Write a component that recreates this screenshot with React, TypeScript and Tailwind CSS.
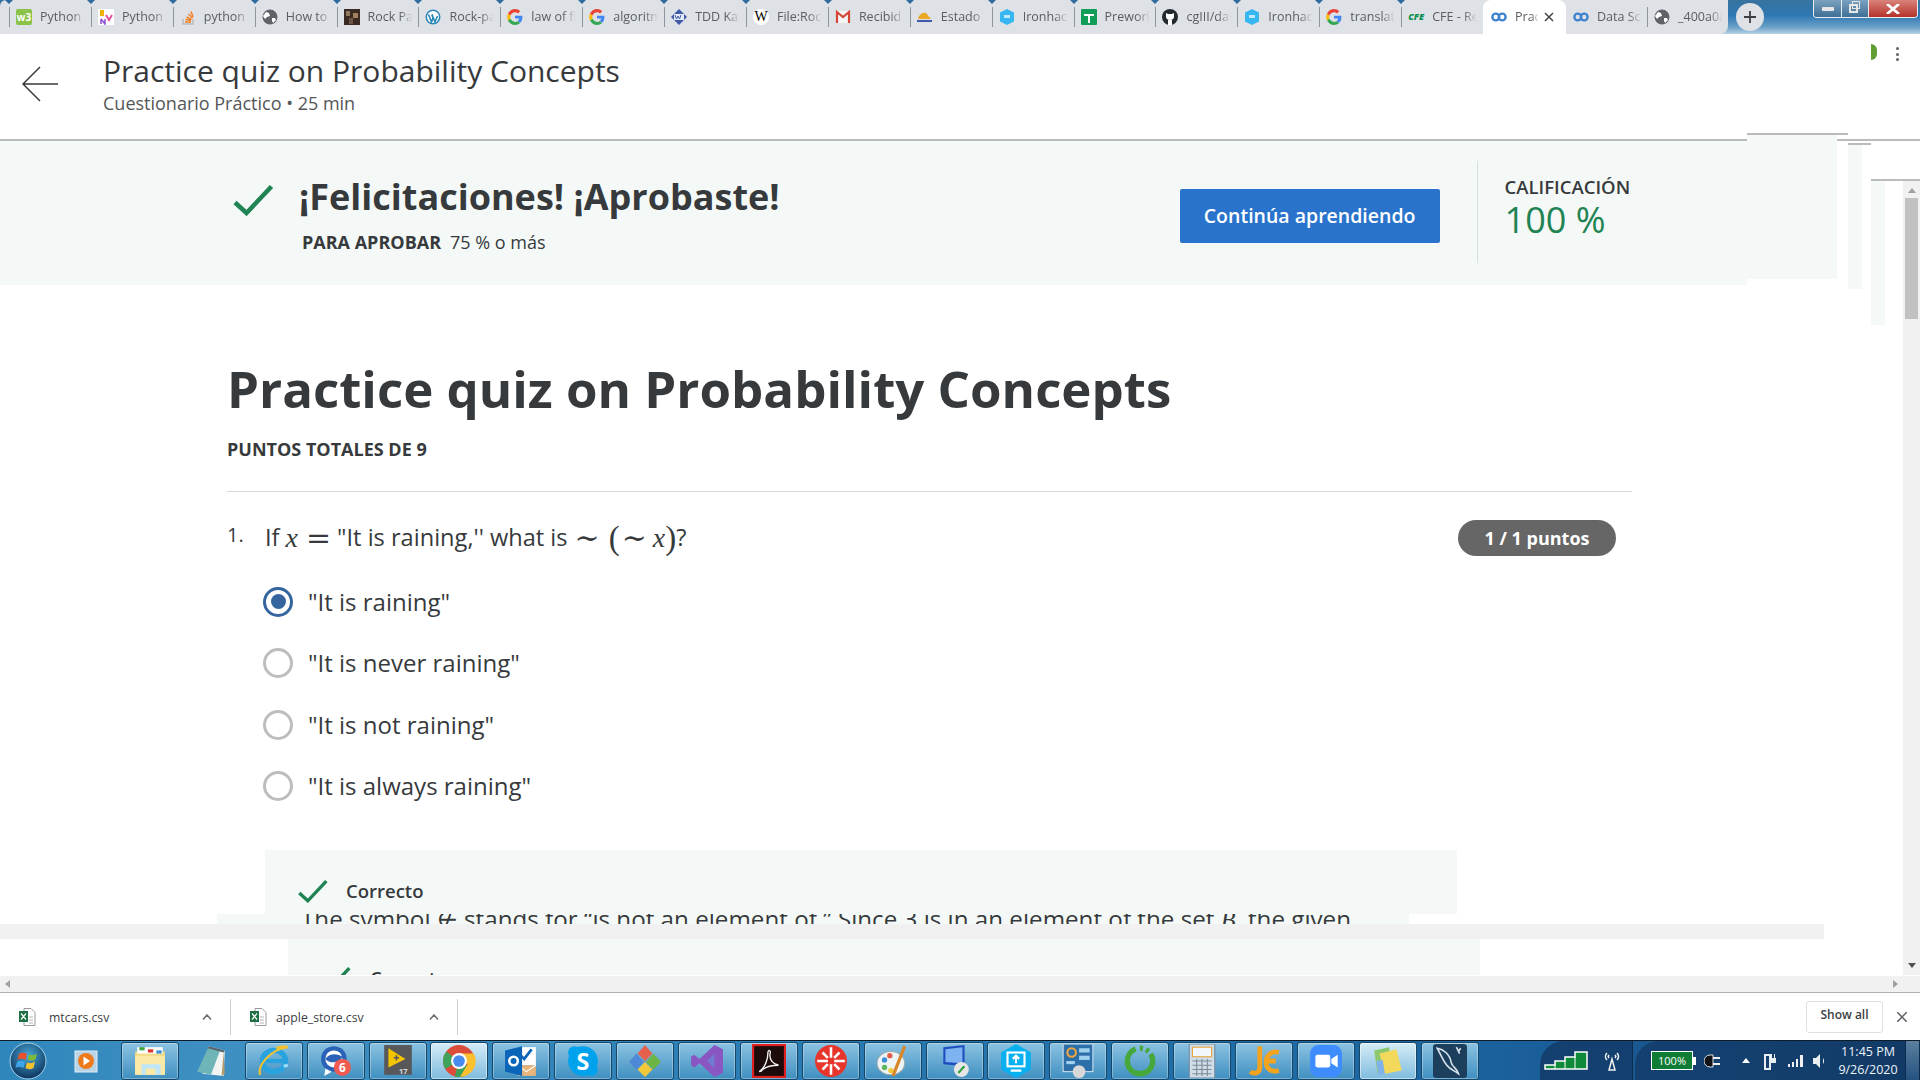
import type { ReactNode } from "react";

const sans = "font-['Open_Sans','Liberation_Sans',sans-serif]";

function Globe({ c = "#5f6368" }: { c?: string }) {
  return (
    <svg viewBox="0 0 16 16" className="size-4">
      <circle cx="8" cy="8" r="7.5" fill={c} />
      <path d="M4 3l3 1 1 3-3 1-2 2-2-3zM10 9l3 0 1 2-3 3-1-2z" fill="#fff" />
    </svg>
  );
}

function GoogleG() {
  return (
    <svg viewBox="0 0 16 16" className="size-4">
      <path d="M15.4 8.2c0-.6 0-1-.1-1.500H8v2.900h4.200c-.2 1-.7 1.700-1.500 2.300l2.400 1.900c1.500-1.300 2.300-3.300 2.300-5.600z" fill="#4285f4" />
      <path d="M8 16c2.100 0 3.900-.7 5.100-1.900l-2.400-1.900c-.7.400-1.600.7-2.700.7-2.100 0-3.800-1.400-4.500-3.300L1 11.500C2.300 14.200 5 16 8 16z" fill="#34a853" />
      <path d="M3.500 9.600c-.3-1-.3-2.100 0-3.100L1 4.500c-1.100 2.200-1.100 4.800 0 7z" fill="#fbbc05" />
      <path d="M8 3.200c1.200 0 2.200.4 3 1.200l2.200-2.200C11.800.9 10 0 8 0 5 0 2.300 1.800 1 4.500l2.500 2C4.200 4.600 5.900 3.200 8 3.200z" fill="#ea4335" />
    </svg>
  );
}

function Infinity2() {
  return (
    <svg viewBox="0 0 16 16" className="size-4" fill="none" stroke="#3f83cf" strokeWidth="2.400">
      <circle cx="4.800" cy="8" r="3.400" />
      <circle cx="11.200" cy="8" r="3.400" />
    </svg>
  );
}

function Hex() {
  return (
    <svg viewBox="0 0 16 16" className="size-4">
      <path d="M8 0l7 3.500v9L8 16l-7-3.500v-9z" fill="#38b6f2" />
      <rect x="5" y="6" width="6" height="3" fill="#bfe8fb" />
    </svg>
  );
}

const tabs: { label: string; icon: ReactNode }[] = [
  { label: "Python f", icon: <div className="size-4 rounded-[2px] bg-[#8bc34a] text-center text-[10px] leading-4 font-bold text-white">w3</div> },
  { label: "Python c", icon: <svg viewBox="0 0 16 16" className="size-4"><rect width="16" height="16" fill="#fff" /><path d="M2 1h4v6H2z" fill="#f0b400" /><path d="M8 6l3 5 3-5" stroke="#e0529c" strokeWidth="2" fill="none" /><path d="M3 10v5M3 10l4 5v-5" stroke="#8a4fd0" strokeWidth="1.500" fill="none" /></svg> },
  { label: "python", icon: <svg viewBox="0 0 16 16" className="size-4" fill="none" stroke="#f48024" strokeWidth="1.500"><path d="M3 10v5h10v-5" stroke="#bcbbbb" /><path d="M5 13h6M5.500 10.500l5.500 1M6.500 8l5 2.500M8.500 5l4 4M11 2.500l2 5.500" /></svg> },
  { label: "How to", icon: <Globe /> },
  { label: "Rock Pa", icon: <svg viewBox="0 0 16 16" className="size-4"><rect width="16" height="16" fill="#3b2a22" /><rect x="2" y="2" width="4" height="5" fill="#8f7a60" /><rect x="9" y="4" width="5" height="5" fill="#a08060" /><rect x="5" y="9" width="4" height="6" fill="#6b5644" /></svg> },
  { label: "Rock-pa", icon: <svg viewBox="0 0 16 16" className="size-4"><circle cx="8" cy="8" r="7.500" fill="#2a86b8" /><circle cx="8" cy="8" r="6" fill="#fff" /><path d="M3.500 5.500L6.500 13l1.500-4-1.200-3.500M7 5.500L10 13l2.500-6" stroke="#2a86b8" strokeWidth="1.600" fill="none" /></svg> },
  { label: "law of fi", icon: <GoogleG /> },
  { label: "algoritm", icon: <GoogleG /> },
  { label: "TDD Kat", icon: <svg viewBox="0 0 16 16" className="size-4"><path d="M8 0l8 8-8 8-8-8z" fill="#3f5aa8" /><rect x="3" y="5" width="10" height="6" fill="#e8ecf8" /><path d="M4 6l1.500 4L7 7l1.500 3L10 6" stroke="#3f5aa8" fill="none" /></svg> },
  { label: "File:Roc", icon: <div className={"size-4 rounded-full bg-white text-center font-['Liberation_Serif',serif] text-[14px] leading-4 text-black"}>W</div> },
  { label: "Recibid", icon: <svg viewBox="0 0 16 16" className="size-4"><rect x="1" y="2" width="14" height="12" fill="#f5f5f5" /><path d="M2 14V3l6 5 6-5v11" stroke="#d44638" strokeWidth="2.200" fill="none" /></svg> },
  { label: "Estado", icon: <svg viewBox="0 0 16 16" className="size-4"><path d="M1 10c1-5 5-7 8-6l5 6z" fill="#e9a825" /><path d="M0 11h15v2H0z" fill="#3f5aa8" /></svg> },
  { label: "Ironhack", icon: <Hex /> },
  { label: "Prework", icon: <svg viewBox="0 0 16 16" className="size-4"><rect width="16" height="16" rx="1" fill="#0f9d58" /><path d="M3 5h10v2H9v7H7V7H3z" fill="#fff" /></svg> },
  { label: "cgIII/dat", icon: <svg viewBox="0 0 16 16" className="size-4"><circle cx="8" cy="8" r="8" fill="#24292e" /><path d="M4 4l2 1h4l2-1v4c0 2-2 3-4 3s-4-1-4-3z" fill="#fff" /><rect x="6" y="11" width="4" height="5" fill="#fff" /></svg> },
  { label: "Ironhack", icon: <Hex /> },
  { label: "translate", icon: <GoogleG /> },
  { label: "CFE - Re", icon: <div className="w-4 text-[9px] leading-4 font-extrabold text-[#0a8f4f] italic">CFE</div> },
];

const tabsAfter = [
  { label: "Data Sc", icon: <Infinity2 /> },
  { label: "_400a0a", icon: <Globe /> },
];

function Tab({ label, icon }: { label: string; icon: ReactNode }) {
  return (
    <div className="relative flex h-full w-[81.900px] shrink-0 items-center gap-[8px] pl-[7px]">
      <div className="absolute top-0 -left-[4px] h-0 w-0 border-x-[4px] border-t-[4px] border-x-transparent border-t-[#2f6b9f]" />
      <div className="absolute top-[7px] left-0 h-[20px] w-px bg-[#8f949b]" />
      {icon}
      <div className="w-[45px] overflow-hidden text-[12.500px] whitespace-nowrap text-[#5a5e63] [mask-image:linear-gradient(to_right,black_70%,transparent)]">{label}</div>
    </div>
  );
}

function TabStrip() {
  return (
    <div className="flex h-[34px] shrink-0 bg-[linear-gradient(to_bottom,#37739f_0%,#2f77b3_45%,#6aa0c8_80%,#b9d3e6_100%)]">
      <div className="flex h-full rounded-tl-[6px] rounded-br-[8px] bg-[#dee1e6] pl-[9px]">
        {tabs.map((t, i) => (
          <Tab key={i} {...t} />
        ))}
        <div className="flex h-full w-[83px] shrink-0 items-center gap-[8px] rounded-t-[8px] bg-white pl-[8px]">
          <Infinity2 />
          <div className="w-[24px] overflow-hidden text-[12.500px] text-[#5a5e63] [mask-image:linear-gradient(to_right,black_70%,transparent)]">Prac</div>
          <svg viewBox="0 0 10 10" className="-ml-[3px] size-[10px]" stroke="#444" strokeWidth="1.500"><path d="M1 1l8 8M9 1l-8 8" /></svg>
        </div>
        {tabsAfter.map((t, i) => (
          <div key={i} className="relative flex h-full w-[81px] shrink-0 items-center gap-[8px] pl-[7px]">
            {i === 1 && <div className="absolute top-[7px] left-0 h-[20px] w-px bg-[#8f949b]" />}
            {t.icon}
            <div className="w-[45px] overflow-hidden text-[12.500px] whitespace-nowrap text-[#5a5e63] [mask-image:linear-gradient(to_right,black_70%,transparent)]">{t.label}</div>
          </div>
        ))}
      </div>
      <div className="mt-[3px] ml-[8px] flex size-[28px] items-center justify-center rounded-full bg-[#dee1e6]">
        <svg viewBox="0 0 12 12" className="size-[12px]" stroke="#3c4043" strokeWidth="1.800"><path d="M6 0v12M0 6h12" /></svg>
      </div>
      <div className="mr-[2px] ml-auto flex h-[18px] w-[105px] overflow-hidden rounded-b-[4px] border border-t-0 border-[#e8eef4]">
        <div className="flex w-[28px] items-center justify-center border-r border-[#e8eef4] bg-[linear-gradient(to_bottom,#7ba2c0,#3f6f96)]"><div className="h-[4px] w-[12px] rounded-[1px] bg-[#e6e6e6]" /></div>
        <div className="relative flex w-[27px] items-center justify-center border-r border-[#e8eef4] bg-[linear-gradient(to_bottom,#7ba2c0,#3f6f96)]">
          <div className="absolute top-[1px] left-[10px] size-[8px] border border-[#e6e6e6]" />
          <div className="absolute top-[4px] left-[7px] size-[9px] border-2 border-[#e6e6e6]" />
        </div>
        <div className="flex flex-1 items-center justify-center bg-[linear-gradient(to_bottom,#d9837a,#b5322a)]">
          <svg viewBox="0 0 14 10" className="h-[10px] w-[14px]" stroke="#fff" strokeWidth="2.800"><path d="M1 0l12 10M13 0L1 10" /></svg>
        </div>
      </div>
    </div>
  );
}

function Check({ className }: { className: string }) {
  return (
    <svg viewBox="0 0 40 31" className={className} fill="none" stroke="#1f8354" strokeWidth="4.500">
      <path d="M1.500 17.500L13 28L38 1.500" />
    </svg>
  );
}

function Radio({ checked, label }: { checked?: boolean; label: string }) {
  return (
    <div className="flex h-[61.500px] items-center gap-[15px]">
      <div className={`flex size-[30px] items-center justify-center rounded-full border-[3px] ${checked ? "border-[#35659f]" : "border-[#bdbdbd]"}`}>
        {checked && <div className="size-[15px] rounded-full bg-[#35659f]" />}
      </div>
      <div className="text-[24px] text-[#373a3c]">{label}</div>
    </div>
  );
}

const mathCls = "font-['Liberation_Serif',serif] italic text-[28px]";
const mathUp = "font-['DejaVu_Serif',serif] text-[30px] leading-[38px]";
const paren = "font-['Liberation_Serif',serif] text-[33px] leading-[38px] font-light";

function Quiz() {
  return (
    <div className="flex-1 overflow-hidden bg-white pl-[227px]">
      <div className="w-[1405px]">
        <h1 className="pt-[69px] text-[51px] leading-[68px] font-bold text-[#373a3c]">Practice quiz on Probability Concepts</h1>
        <div className="mt-[15px] text-[18px] leading-[24px] font-bold text-[#373a3c]">PUNTOS TOTALES DE 9</div>
        <div className="mt-[30px] h-px bg-[#d6d6d6]" />
        <div className="mt-[27px] flex h-[38px] items-center pr-[16px]">
          <div className="mb-[6px] w-[38px] text-[20px] text-[#373a3c]">1.</div>
          <div className="flex items-center text-[23.600px] text-[#373a3c]">
            If<span className={`${mathCls} ml-[6px]`}>x</span>
            <span className={`${mathUp} mr-[6px] ml-[8px]`}>=</span>"It is raining,'' what is<span className={`${mathUp} ml-[7px]`}>∼</span>
            <span className={`${paren} ml-[9px]`}>(</span><span className={`${mathUp} ml-[2px]`}>∼</span><span className={`${mathCls} ml-[6px]`}>x</span><span className={paren}>)</span>?
          </div>
          <div className="ml-auto flex h-[36px] w-[158px] items-center justify-center rounded-full bg-[#666666] text-[18px] font-bold text-white">1 / 1 puntos</div>
        </div>
        <div className="mt-[14px] ml-[36px]">
          <Radio checked label={'"It is raining"'} />
          <Radio label={'"It is never raining"'} />
          <Radio label={'"It is not raining"'} />
          <Radio label={'"It is always raining"'} />
        </div>
        <div className="mt-[33px] ml-[38px] h-[64px] w-[1192px] bg-[#f4f9f7] pt-[29px] pl-[32px]">
          <div className="flex items-center gap-[17px]">
            <Check className="h-[23px] w-[32px]" />
            <div className="text-[18.500px] leading-[24px] font-semibold text-[#373a3c]">Correcto</div>
          </div>
        </div>
      </div>
    </div>
  );
}

function Banner() {
  return (
    <div className="flex h-[144px] w-[1747px] shrink-0 items-center bg-[#f4f9f7] pl-[233px]">
      <Check className="-mt-[26px] h-[31px] w-[41px]" />
      <div className="ml-[25px]">
        <div className="text-[36px] leading-[50px] font-bold text-[#373a3c]">¡Felicitaciones! ¡Aprobaste!</div>
        <div className="mt-[8px] flex gap-[9px] pl-[3px] text-[18px] leading-[24px] text-[#373a3c]">
          <span className="font-bold">PARA APROBAR</span>
          <span>75 % o más</span>
        </div>
      </div>
      <button className="mt-[5px] ml-[400px] h-[54px] w-[260px] rounded-[2px] bg-[#2a73cc] text-[19.500px] font-semibold text-white">Continúa aprendiendo</button>
      <div className="mt-[-2px] mr-[37px] ml-[37px] h-[102px] w-px bg-[#d9dede]" />
      <div className="-mt-[11px] -ml-[10px]">
        <div className="text-[18.500px] leading-[24px] font-semibold text-[#373a3c]">CALIFICACIÓN</div>
        <div className="text-[36px] leading-[42px] text-[#1f8354]">100 %</div>
      </div>
    </div>
  );
}

function Glitches() {
  return (
    <>
      <div className="absolute top-[99px] left-[1747px] h-[146px] w-[90px] border-t-2 border-[#bbbbbb] bg-[#f4f9f7]" />
      <div className="absolute top-[99px] left-[1837px] h-[2px] w-[11px] bg-[#bbbbbb]" />
      <div className="absolute top-[109px] left-[1848px] h-[146px] w-[14px] bg-[#f4f9f7]" />
      <div className="absolute top-[109px] left-[1848px] h-[2px] w-[23px] bg-[#bbbbbb]" />
      <div className="absolute top-[145px] left-[1871px] h-[146px] w-[14px] bg-[#f4f9f7]" />
      <div className="absolute top-[145px] left-[1871px] h-[2px] w-[49px] bg-[#bbbbbb]" />
      <div className="absolute top-[10px] left-[1871px] h-[16px] w-[6px] rounded-r-full bg-[#5f9e34]" />
      <div className="absolute top-[13px] left-[1896px] flex flex-col gap-[2.500px]">
        <div className="size-[3px] rounded-full bg-[#5f6368]" />
        <div className="size-[3px] rounded-full bg-[#5f6368]" />
        <div className="size-[3px] rounded-full bg-[#5f6368]" />
      </div>

      {/* repainted strip of the feedback text, cut by the band under it */}
      <div className="absolute top-[880px] left-[217px] h-[10px] w-[1192px] overflow-hidden bg-[#f4f9f7] pl-[84px] text-[24.200px] leading-[9px] whitespace-nowrap text-[#373a3c]">
        The symbol ∉ stands for “is not an element of.” Since 3 is in an element of the set <i className="font-['Liberation_Serif',serif]">B</i>, the given
      </div>
      <div className="absolute top-[890px] left-0 h-[15px] w-[1824px] bg-[#f1f1f1]" />
      <div className="absolute top-[905px] left-[288px] h-[36px] w-[1192px] overflow-hidden bg-[#f4f9f7]">
        <div className="absolute top-[28px] left-[32px]"><Check className="h-[23px] w-[32px]" /></div>
        <div className="absolute top-[27px] left-[82px] text-[18.500px] leading-[24px] font-semibold text-[#373a3c]">Correcto</div>
      </div>

      <div className="absolute top-[147px] right-0 flex h-[794px] w-[17px] flex-col items-center bg-[#f1f1f1]">
        <div className="mt-[7px] h-0 w-0 border-x-[4px] border-b-[5px] border-x-transparent border-b-[#a0a0a0]" />
        <div className="mt-[5px] h-[121px] w-[13px] bg-[#c1c1c1]" />
        <div className="mt-auto mb-[7px] h-0 w-0 border-x-[4px] border-t-[5px] border-x-transparent border-t-[#505050]" />
      </div>
    </>
  );
}

function CsvIcon() {
  return (
    <svg viewBox="0 0 17 18" className="h-[18px] w-[17px]">
      <path d="M5 .5h7l4 4v13H5z" fill="#fff" stroke="#9a9a9a" />
      <rect x="0" y="3" width="9" height="11" fill="#1d7044" />
      <path d="M2 5.500l5 6M7 5.500l-5 6" stroke="#fff" strokeWidth="1.200" />
      <path d="M10 9h4M10 12h4M10 15h4" stroke="#b4b4b4" />
    </svg>
  );
}

function DownloadChip({ name, w, gap }: { name: string; w: string; gap: string }) {
  return (
    <div className={`flex h-[36px] items-center border-r border-[#cfcfcf] pl-[19px] ${w}`}>
      <CsvIcon />
      <div className={`pt-[3px] text-[12.250px] text-[#3c4043] ${gap}`}>{name}</div>
      <svg viewBox="0 0 10 6" className="mr-[18px] ml-auto h-[6px] w-[10px]" fill="none" stroke="#6b6b6b" strokeWidth="1.500"><path d="M1 5.500L5 1l4 4.500" /></svg>
    </div>
  );
}

function DownloadBar() {
  return (
    <div className="flex h-[48px] shrink-0 items-center border-t border-[#b0b0b0] bg-white">
      <DownloadChip name="mtcars.csv" w="w-[231px]" gap="ml-[13px]" />
      <DownloadChip name="apple_store.csv" w="w-[227px]" gap="ml-[9px]" />
      <div className="ml-auto flex h-[32px] w-[77px] items-center justify-center rounded-[3px] border border-[#e0e0e0] pb-[3px] text-[12px] font-semibold text-[#3c4043]">Show all</div>
      <svg viewBox="0 0 10 10" className="mr-[13px] ml-[14px] size-[10px]" stroke="#5f6368" strokeWidth="1.500"><path d="M0 0l10 10M10 0L0 10" /></svg>
    </div>
  );
}

const box = "size-[34px]";
const taskIcons: { boxed: boolean; light?: boolean; icon: ReactNode }[] = [
  { boxed: true, icon: <svg viewBox="0 0 32 30" className={box}><path d="M2 6h28v22H2z" fill="#f3da83" /><path d="M2 10h28v18H2z" fill="#fbe9a8" /><rect x="4" y="2" width="24" height="6" fill="#fff" /><rect x="6" y="2" width="5" height="3" fill="#3ea63e" /><rect x="14" y="4" width="5" height="3" fill="#d33" /><rect x="22" y="5" width="5" height="3" fill="#3a8fd8" /><path d="M8 18h18v10h-5v-6h-9v6H8z" fill="#bfe6f5" /></svg> },
  { boxed: false, icon: <svg viewBox="0 0 32 32" className={box}><path d="M13 2l15 4-1 24-20-2z" fill="#f2f4f4" /><path d="M13 2l11 3-9 24-13-3z" fill="#6fb5b8" /><path d="M13 2l15 4-1 2-15-4z" fill="#5a6470" /><path d="M27 7l1 21-3 2z" fill="#b59a6a" /></svg> },
  { boxed: true, icon: <svg viewBox="0 0 32 30" className={box} fill="none"><ellipse cx="16" cy="15" rx="11" ry="10" stroke="#29a3e0" strokeWidth="5" /><path d="M8 15h17" stroke="#29a3e0" strokeWidth="4" /><path d="M3 28C0 20 12 4 29 2c-5-2-9 0-11 1" stroke="#f2c230" strokeWidth="2" /><path d="M25 20l4-1" stroke="#a0dcf5" strokeWidth="3" /></svg> },
  { boxed: true, icon: <svg viewBox="0 0 32 30" className={box}><circle cx="14" cy="13" r="12" fill="#2a62b8" /><circle cx="14" cy="13" r="8" fill="#fff" /><path d="M6 13c4-6 12-5 16-2-2 6-12 7-16 2z" fill="#2a62b8" /><path d="M6 22l-1 7 7-4z" fill="#fff" /><circle cx="22" cy="21" r="8" fill="#ef5b50" /><text x="22" y="25" textAnchor="middle" fontSize="11" fontWeight="700" fill="#fff" fontFamily="Open Sans">6</text></svg> },
  { boxed: true, icon: <svg viewBox="0 0 32 30" className={box}><rect x="3" y="0" width="26" height="28" fill="#58585a" /><path d="M7 3l16 10L7 21z" fill="#f5c400" /><path d="M12 12h5M14.500 9.500v5" stroke="#58585a" strokeWidth="1.500" /><text x="21" y="27" fontSize="7" fontWeight="700" fill="#ddd" fontFamily="Open Sans" textAnchor="middle">17</text></svg> },
  { boxed: true, light: true, icon: <svg viewBox="0 0 32 32" className={box}><circle cx="16" cy="16" r="15" fill="#dd4b39" /><path d="M16 16L3 23.500A15 15 0 0 1 4 7z" fill="#3da35a" /><path d="M16 16l13 7.500A15 15 0 0 1 12 30.500z" fill="#3da35a" /><path d="M16 9h14a15 15 0 0 1-13 22l7-12z" fill="#fbc02d" /><circle cx="16" cy="16" r="7.500" fill="#fff" /><circle cx="16" cy="16" r="5.500" fill="#4a8bf0" /></svg> },
  { boxed: true, icon: <svg viewBox="0 0 32 30" className={box}><rect x="13" y="2" width="17" height="17" fill="#fff" /><path d="M15 9l4 4 7-9" stroke="#0a64b8" strokeWidth="2.500" fill="none" /><path d="M13 19h17v10H13z" fill="#e9b57a" /><path d="M13 19l8 6 9-6" stroke="#fff" fill="none" /><path d="M1 5l16-4v28L1 25z" fill="#0a64b8" /><circle cx="9" cy="15" r="4" fill="none" stroke="#fff" strokeWidth="2.400" /></svg> },
  { boxed: true, icon: <svg viewBox="0 0 32 32" className={box}><circle cx="16" cy="16" r="14" fill="#00a2ed" /><circle cx="8" cy="8" r="6" fill="#00a2ed" /><circle cx="24" cy="24" r="6" fill="#00a2ed" /><text x="16" y="24" textAnchor="middle" fontSize="22" fontWeight="700" fill="#fff" fontFamily="Open Sans">S</text></svg> },
  { boxed: true, icon: <svg viewBox="0 0 32 32" className={box}><path d="M16 1l7 8-7 7-7-7z" fill="#e5604d" /><path d="M24 9l7 8-7 7-7-7z" fill="#6cb544" /><path d="M8 9l7 8-7 7-7-7z" fill="#4d88d9" /><path d="M16 17l7 7-7 7-7-7z" fill="#f0c93a" /></svg> },
  { boxed: true, icon: <svg viewBox="0 0 32 32" className={box}><path d="M23 1l8 4v22l-8 4L9 18l-5 4-3-2V12l3-2 5 4z" fill="#8a56c2" /><path d="M23 9l-7 7 7 7z" fill="#4db4e8" opacity="0.400" /></svg> },
  { boxed: true, icon: <svg viewBox="0 0 32 30" className={box}><rect x="1" y="0" width="30" height="30" fill="#1d0a0a" stroke="#e02020" strokeWidth="2" /><path d="M8 24c4-3 7-10 7-17 0-3 3-2 2 1-1 6 3 10 8 11-5 0-11 1-15 4-2 3-4 2-2 1z" fill="none" stroke="#f0f0f0" strokeWidth="1.300" /></svg> },
  { boxed: true, icon: <svg viewBox="0 0 32 32" className={box}><circle cx="16" cy="16" r="15" fill="#e8352b" /><path d="M16 3v10M16 19v10M3 16h10M19 16h10M8 8l5 5M24 8l-5 5M8 24l5-5M24 24l-5-5" stroke="#fff" strokeWidth="2.400" /></svg> },
  { boxed: true, icon: <svg viewBox="0 0 32 32" className={box}><ellipse cx="14" cy="18" rx="13" ry="11" fill="#eef3f6" stroke="#9aa" /><circle cx="8" cy="15" r="2.500" fill="#3a8fd8" /><circle cx="13" cy="11" r="2.500" fill="#e25c4a" /><circle cx="8" cy="22" r="2.500" fill="#5cb85c" /><circle cx="14" cy="25" r="2.500" fill="#f0c93a" /><path d="M27 2L16 30" stroke="#d9862a" strokeWidth="3" /></svg> },
  { boxed: true, icon: <svg viewBox="0 0 32 32" className={box}><path d="M5 3l20-2v20L5 19z" fill="#1f4fbf" /><path d="M7 5l16-2v15L7 17z" fill="#7fb2f0" /><circle cx="22" cy="24" r="7" fill="#e6e6e6" /><path d="M19 27c2-1 3-4 6-6" stroke="#2e9e3e" strokeWidth="2" fill="none" /></svg> },
  { boxed: true, icon: <svg viewBox="0 0 32 32" className={box}><path d="M16 0l14 8v16l-14 8-14-8V8z" fill="#08b0f0" /><rect x="8" y="8" width="16" height="13" fill="none" stroke="#fff" strokeWidth="2" /><path d="M16 18v-6M13 14l3-3 3 3M11 25h10" stroke="#fff" strokeWidth="2" fill="none" /></svg> },
  { boxed: true, icon: <svg viewBox="0 0 32 32" className={box}><rect x="2" y="0" width="28" height="26" fill="#2d6fa8" stroke="#cfe0ee" /><circle cx="10" cy="8" r="4" fill="none" stroke="#f2a53a" strokeWidth="2" /><rect x="17" y="4" width="10" height="4" fill="#9fd0f0" /><rect x="17" y="11" width="10" height="4" fill="#9fd0f0" /><rect x="5" y="16" width="8" height="3" fill="#9fd0f0" /><circle cx="17" cy="26" r="6" fill="#d8d8d8" /></svg> },
  { boxed: true, icon: <svg viewBox="0 0 32 32" className={box} fill="none"><circle cx="16" cy="16" r="12" stroke="#46a83a" strokeWidth="5" strokeDasharray="52 4 3 3 3 3" /></svg> },
  { boxed: true, icon: <svg viewBox="0 0 28 32" className={box}><rect x="2" y="0" width="24" height="32" fill="#cfdde8" stroke="#789" /><rect x="5" y="3" width="18" height="9" fill="#f2f7fb" stroke="#e8a33a" /><path d="M5 16h18M5 20h18M5 24h18M5 28h18M9 14v16M14 14v16M19 14v16" stroke="#7d8a95" /></svg> },
  { boxed: true, icon: <svg viewBox="0 0 32 32" className={box} fill="none" stroke="#f2a31f" strokeWidth="4.500"><path d="M12 2v20c0 5-5 7-9 4" /><path d="M30 8c-6-2-12 2-12 9s6 10 12 8M18 16h9" /></svg> },
  { boxed: true, icon: <svg viewBox="0 0 32 32" className={box}><rect x="1" y="1" width="30" height="30" rx="8" fill="#3f8cff" /><rect x="6" y="10" width="14" height="12" rx="2" fill="#fff" /><path d="M21 14l6-4v12l-6-4z" fill="#fff" /></svg> },
  { boxed: true, light: true, icon: <svg viewBox="0 0 32 32" className={box}><path d="M3 6l14-3 3 20-14 4z" fill="#8cc96e" /><path d="M8 9l16-4 5 20-16 3z" fill="#f2d95c" /><path d="M5 16l6-1 2 13-6 1z" fill="#7fb2e8" /></svg> },
  { boxed: true, icon: <svg viewBox="0 0 32 32" className="size-[34px]"><rect width="32" height="32" rx="3" fill="#1c3f5e" /><path d="M4 4c6 1 12 6 13 13 1 5 6 6 7 11-4-3-8-4-11-8C9 15 8 11 4 4z" fill="none" stroke="#d7e3ec" strokeWidth="1.500" /><path d="M22 3l3 6M26 4l-2 3" stroke="#d7e3ec" strokeWidth="1.500" /></svg> },
];

function TaskButton({ boxed, light, icon }: { boxed: boolean; light?: boolean; icon: ReactNode }) {
  const look = boxed
    ? light
      ? "rounded-[3px] border border-[#15476b] bg-[linear-gradient(to_bottom,#d5ecf7,#7fbcdd)] shadow-[inset_0_0_0_1px_rgba(255,255,255,0.5)]"
      : "rounded-[3px] border border-[#15476b] bg-[linear-gradient(to_bottom,#8cc3e2,#3f8fc0)] shadow-[inset_0_0_0_1px_rgba(255,255,255,0.3)]"
    : "";
  return <div className={`flex h-[38px] w-[58px] shrink-0 items-center justify-center ${look}`}>{icon}</div>;
}

function Tray() {
  return (
    <div className="ml-auto flex h-full">
      <div className="flex w-[93px] items-center rounded-tl-[24px] border-r border-[#0c2c50] bg-[#14406f] pl-[4px]">
        <svg viewBox="0 0 44 19" className="h-[19px] w-[44px]">
          <path d="M1 18v-4h10v-4h10V6h10V1h12v17z" fill="#0f8a3a" stroke="#fff" strokeWidth="1.500" />
          <path d="M11 14v4M21 10v8M31 6v12" stroke="#fff" />
        </svg>
        <svg viewBox="0 0 16 20" className="ml-[16px] h-[20px] w-[16px]" fill="none" stroke="#f0f0f0" strokeWidth="1.500">
          <path d="M8 8L5 19h6zM3 2c-2 2-2 5 0 7M13 2c2 2 2 5 0 7M5 4c-1 1-1 2 0 3M11 4c1 1 1 2 0 3" />
        </svg>
      </div>
      <div className="ml-[2px] flex w-[100px] items-center rounded-tl-[24px] bg-[#14406f] pl-[16px]">
        <div className="flex h-[19px] w-[42px] items-center justify-center border border-white bg-[#0f7d35] text-[11px] leading-none text-white">100%</div>
        <div className="h-[8px] w-[3px] bg-white" />
        <svg viewBox="0 0 17 14" className="ml-[8px] h-[14px] w-[17px]"><path d="M9 1H6a6 6 0 0 0 0 12h3z" fill="#101418" stroke="#ddd" /><path d="M9 4h7M9 10h7" stroke="#eee" strokeWidth="2" /></svg>
      </div>
      <div className="flex w-[170px] items-center bg-[linear-gradient(to_right,#14406f,#123a66)] pl-[7px]">
        <div className="h-0 w-0 border-x-[4px] border-b-[5px] border-x-transparent border-b-white" />
        <svg viewBox="0 0 14 20" className="ml-[13px] h-[20px] w-[14px]" fill="#e8eef2"><path d="M1 3h7v16H1zM3 5v12h3V5z" /><path d="M7 7h6v5H7zM8 3h1v4H8zM11 3h1v4h-1z" /></svg>
        <svg viewBox="0 0 16 13" className="ml-[11px] h-[13px] w-[16px]" fill="#f0f0f0"><path d="M0 10h2v3H0zM4 8h2v5H4zM8 5h2v8H8zM12 1h3v12h-3z" /></svg>
        <svg viewBox="0 0 14 16" className="ml-[9px] h-[16px] w-[14px]" fill="#e8eef2"><path d="M0 5h3l4-4v14l-4-4H0zM10 5c1.500 2 1.500 4 0 6" /></svg>
        <div className="ml-[10px] w-[62px] text-center text-[12.500px] leading-[18px] text-[#eef4fa]">
          <div>11:45 PM</div>
          <div>9/26/2020</div>
        </div>
      </div>
      <div className="w-[15px] border-x border-[#0c2c50] bg-[linear-gradient(to_bottom,#5c7f9f,#24527e)]" />
    </div>
  );
}

function Taskbar() {
  return (
    <div className="flex h-[40px] shrink-0 items-center border-t border-[#0f1d2b] bg-[linear-gradient(to_right,#2f86bb_0%,#3f90c2_12%,#2a7cb2_40%,#1d68a2_70%,#1a5d98_82%,#14406f_100%)]">
      <svg viewBox="0 0 38 38" className="ml-[9px] size-[38px]">
        <defs>
          <radialGradient id="orb" cx="50%" cy="35%" r="70%">
            <stop offset="0%" stopColor="#4aa8d8" />
            <stop offset="100%" stopColor="#062a52" />
          </radialGradient>
        </defs>
        <circle cx="19" cy="19" r="18" fill="url(#orb)" stroke="#a8d6ee" />
        <path d="M10 12c3-2 6-1 8 0l-1.500 6c-2-1-5-2-8 0z" fill="#e9522c" />
        <path d="M20 12.500c3 1 5 1 8-1l-1.500 6c-3 2-6 1-8 0z" fill="#7dbb3c" />
        <path d="M8 20c3-2 6-1 8 0l-1.500 6c-2-1-5-2-8 0z" fill="#3ea5e8" />
        <path d="M18 20.500c3 1 5 1 8-1L24.500 26c-3 2-6 1-8 0z" fill="#f4c22c" />
      </svg>
      <div className="mr-[16px] ml-[22px] flex w-[36px] justify-center">
        <svg viewBox="0 0 26 24" className="h-[24px] w-[26px]"><rect x="1" y="2" width="22" height="21" fill="#b8d4e6" stroke="#dfeef7" /><circle cx="12" cy="12" r="8" fill="#ee7a1c" /><path d="M9.500 7.500L16 12l-6.500 4.500z" fill="#fff" /></svg>
      </div>
      <div className="flex gap-[3.900px]">
        {taskIcons.map((t, i) => (
          <TaskButton key={i} {...t} />
        ))}
      </div>
      <Tray />
    </div>
  );
}

export default function App() {
  return (
    <div className={`flex h-[1080px] w-[1920px] flex-col overflow-hidden bg-white ${sans}`}>
      <TabStrip />
      <div className="relative flex flex-1 flex-col overflow-hidden">
        <header className="flex h-[107px] shrink-0 items-center border-b-2 border-[#bbbbbb] pb-[6px]">
          <svg viewBox="0 0 36 36" className="ml-[22px] size-[36px]" fill="none" stroke="#373a3c" strokeWidth="1.500"><path d="M36 18H1M18 1L1 18l17 17" /></svg>
          <div className="ml-[45px]">
            <div className="text-[30px] leading-[38px] text-[#373a3c]">Practice quiz on Probability Concepts</div>
            <div className="text-[18px] leading-[26px] text-[#545658]">Cuestionario Práctico • 25 min</div>
          </div>
        </header>
        <Banner />
        <Quiz />
        <div className="flex h-[16px] shrink-0 items-center justify-between bg-[#f1f1f1] pr-[22px] pl-[5px]">
          <div className="h-0 w-0 border-y-[4px] border-r-[5px] border-y-transparent border-r-[#a0a0a0]" />
          <div className="h-0 w-0 border-y-[4px] border-l-[5px] border-y-transparent border-l-[#a0a0a0]" />
        </div>
        <Glitches />
      </div>
      <DownloadBar />
      <Taskbar />
    </div>
  );
}
